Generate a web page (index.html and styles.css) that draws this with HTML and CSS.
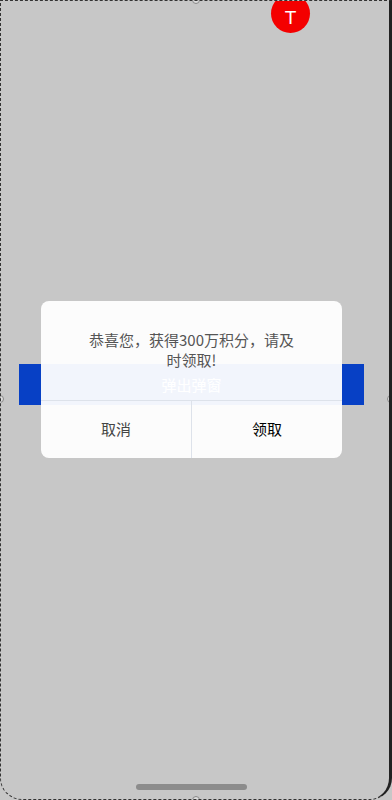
FILE: index.html
```html
<!DOCTYPE html>
<html lang="zh">
<head>
	<meta charset="UTF-8">
	<meta name="viewport" content="width=device-width, initial-scale=1.0">
	<title>弹出弹窗</title>
	<link rel="stylesheet" href="styles.css">
</head>
<body>
	<div id="phone">
		<span class="handle handle-top"></span>
		<span class="handle handle-left"></span>
		<span class="handle handle-right"></span>
		<span class="handle handle-bottom"></span>

		<div id="avatar">T</div>

		<div id="open-btn">弹出弹窗</div>

		<div class="home-bar"></div>

		<div id="dialog">
			<div class="dialog-msg">恭喜您，获得300万积分，请及时领取!</div>
			<div class="dialog-btns">
				<a href="javascript:void(0);" class="btn-cancel">取消</a>
				<a href="javascript:void(0);" class="btn-ok">领取</a>
			</div>
		</div>
	</div>
</body>
</html>
```

FILE: styles.css
```css
* {
	margin: 0;
	padding: 0;
	text-decoration: none;
	box-sizing: border-box;
}
body {
	font-family: "Noto Sans CJK SC", "Noto Sans", sans-serif;
	background-color: #c7c7c7;
}
#phone {
	width: 392px;
	height: 800px;
	background-color: #c7c7c7;
	border: 1px dashed #333;
	border-right: 3px solid #222;
	border-radius: 0 0 22px 22px;
	position: relative;
	overflow: hidden;
	display: flex;
	flex-direction: column;
	padding-top: 363px;
}

.handle {
	position: absolute;
	width: 8px;
	height: 8px;
	border-radius: 50%;
	border: 1px solid #888;
	background-color: #ddd;
}
.handle-top { top: -5px; left: 191px; }
.handle-bottom { bottom: -5px; left: 191px; }
.handle-left { left: -5px; top: 394px; }
.handle-right { right: -6px; top: 394px; }

#avatar {
	position: absolute;
	top: -7px;
	left: 270px;
	width: 39px;
	height: 39px;
	border-radius: 50%;
	background-color: #f40000;
	color: #fff;
	font-family: "Liberation Sans", sans-serif;
	font-size: 19px;
	line-height: 39px;
	padding-top: 4px;
	text-align: center;
}

#open-btn {
	margin-left: 18px;
	width: 345px;
	height: 41px;
	line-height: 41px;
	background-color: #0740c5;
	color: #fff;
	font-size: 15px;
	text-align: center;
}

.home-bar {
	margin: auto 0 9px 135px;
	width: 111px;
	height: 6px;
	border-radius: 3px;
	background-color: #8c8c8c;
}

#dialog {
	position: absolute;
	left: 40px;
	top: 300px;
	width: 301px;
	border-radius: 8px;
	background-color: rgba(255, 255, 255, .95);
	overflow: hidden;
}

.dialog-msg {
	padding: 29px 46px 30px;
	font-size: 15px;
	line-height: 20px;
	color: #555;
	text-align: center;
}

.dialog-btns {
	display: flex;
	border-top: 1px solid #dde2ea;
	height: 58px;
}

.dialog-btns a {
	flex: 1;
	line-height: 56px;
	text-align: center;
	font-size: 15px;
}

.btn-cancel {
	color: #444;
	border-right: 1px solid #dde2ea;
}

.btn-ok {
	color: #000;
}
```
